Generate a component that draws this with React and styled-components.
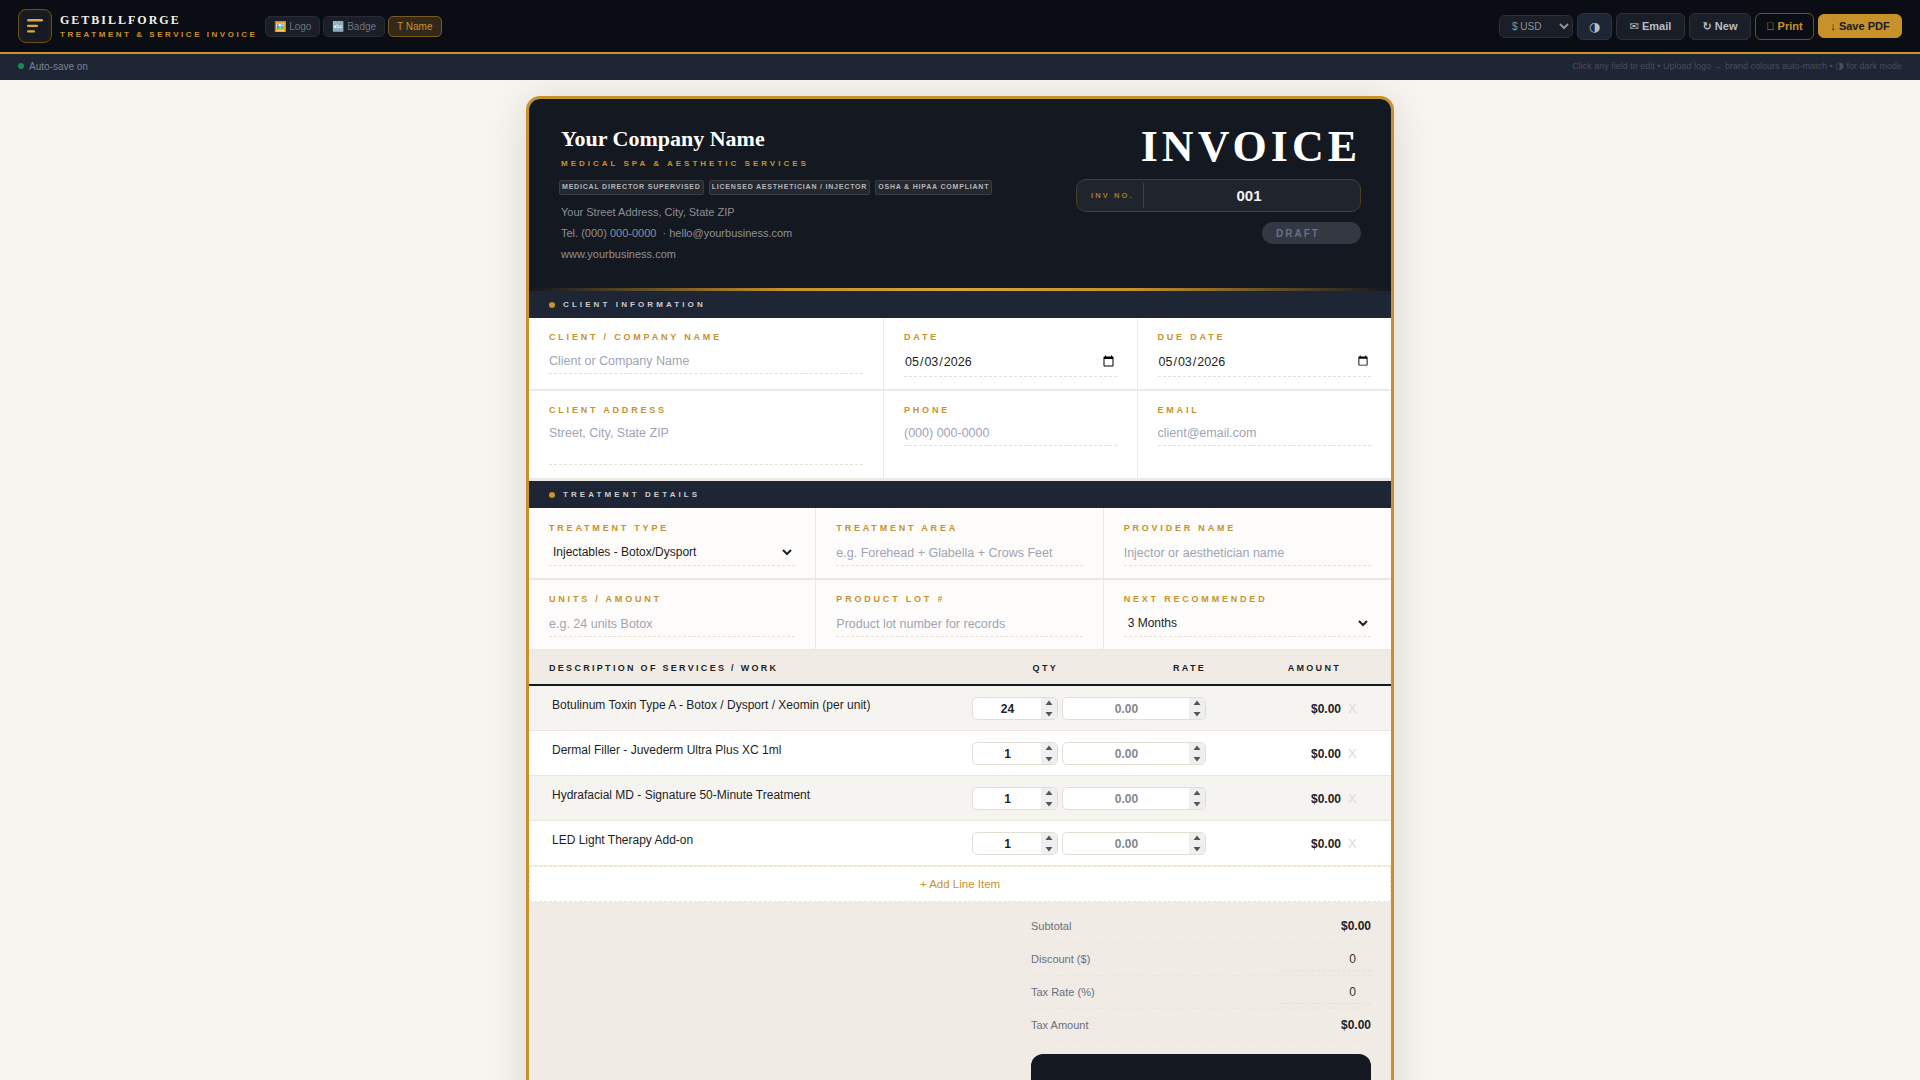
import React from 'react';
import styled, { createGlobalStyle } from 'styled-components';

const Global = createGlobalStyle`
  * { box-sizing: border-box; }
  html, body { margin: 0; padding: 0; background: #f8f5f0; }
  body { font-family: "Liberation Sans", "DejaVu Sans", Arial, sans-serif; }
  ::-webkit-scrollbar { width: 0; height: 0; }
`;

const gold = '#c8922a';
const sans = '"Liberation Sans", "DejaVu Sans", sans-serif';
const spinIcon = `url("data:image/svg+xml,%3Csvg xmlns='http://www.w3.org/2000/svg' width='16' height='22'%3E%3Crect width='16' height='22' fill='%23efefef'/%3E%3Cpath d='M4.5 7.5 8 3l3.5 4.5zM4.5 14.5h7L8 19z' fill='%23555'/%3E%3C/svg%3E")`;

const Page = styled.div`
  min-height: 100vh;
  background: #f8f5f0;
`;
const TopBar = styled.header`
  height: 54px;
  padding: 0 18px;
  display: flex;
  align-items: center;
  justify-content: space-between;
  background: #0a0d14;
  border-bottom: 2px solid ${gold};
`;
const Group = styled.div`
  display: flex;
  align-items: center;
  gap: ${p => p.$gap || 4}px;
`;
const LogoMark = styled.div`
  width: 34px;
  height: 34px;
  border-radius: 8px;
  border: 1px solid #6b5020;
  background: #1f1c18;
  display: flex;
  align-items: center;
  justify-content: center;
`;
const Brand = styled.div`
  margin-left: 5px;
  margin-right: 5px;
  display: flex;
  flex-direction: column;
  gap: 3px;
`;
const BrandName = styled.div`
  font-family: "Liberation Serif", serif;
  font-weight: 700;
  font-size: 12px;
  line-height: 14px;
  letter-spacing: 2px;
  color: #f4f1ea;
`;
const BrandSub = styled.div`
  font-size: 8px;
  font-weight: 700;
  line-height: 10px;
  letter-spacing: 2.53px;
  color: ${gold};
`;
const Tab = styled.button`
  height: 21px;
  padding: 0 8px;
  display: flex;
  align-items: center;
  gap: 3px;
  font-family: ${sans};
  font-size: 10px;
  border-radius: 5px;
  color: ${p => (p.$active ? gold : '#6e7480')};
  background: ${p => (p.$active ? '#33291a' : '#1a1e27')};
  border: 1px solid ${p => (p.$active ? '#7a5a20' : '#262b35')};
`;
const Currency = styled.select`
  width: 74px;
  height: 23px;
  padding: 0 8px;
  font-family: ${sans};
  font-size: 10px;
  color: #8d929c;
  background: #1a1e27;
  border: 1px solid #2c313b;
  border-radius: 6px;
  outline: none;
  option { color: #111; background: #fff; }
`;
const ActionBtn = styled.button`
  width: ${p => p.$w}px;
  height: ${p => (p.$solid ? 24 : 27)}px;
  padding: 0;
  display: flex;
  align-items: center;
  justify-content: center;
  gap: 4px;
  font-family: ${sans};
  font-size: 11px;
  font-weight: 700;
  border-radius: 6px;
  white-space: nowrap;
  color: ${p => (p.$solid ? '#17191f' : p.$gold ? gold : '#b8bcc4')};
  background: ${p => (p.$solid ? gold : p.$gold ? 'transparent' : p.$theme ? '#1e2535' : '#1a1e27')};
  border: 1px solid ${p => (p.$solid ? gold : p.$gold ? '#6b5020' : p.$theme ? '#2c3444' : '#2c313b')};
`;
const HalfMoon = styled.span`
  font-family: "DejaVu Sans", sans-serif;
  font-weight: 400;
  font-size: ${p => p.$size}px;
  line-height: 1;
`;
const StatusBar = styled.div`
  height: 26px;
  padding: 0 18px 2px;
  display: flex;
  align-items: center;
  justify-content: space-between;
  background: #1e2535;
`;
const Saved = styled.div`
  display: flex;
  align-items: center;
  gap: 5px;
  font-size: 10px;
  color: #7d828e;
`;
const Dot = styled.span`
  width: ${p => p.$size || 6}px;
  height: ${p => p.$size || 6}px;
  border-radius: 50%;
  flex: none;
  background: ${p => p.$color};
`;
const Hint = styled.div`
  font-size: 9px;
  color: #474d5b;
`;
const Main = styled.main`
  padding: 16px 0 40px;
  display: flex;
  justify-content: center;
`;
const Card = styled.div`
  width: 868px;
  border: 3px solid ${gold};
  border-radius: 14px;
  overflow: hidden;
  background: #fff;
  box-shadow: 0 4px 40px rgba(0, 0, 0, 0.13);
`;
const Header = styled.div`
  position: relative;
  height: 192px;
  padding: 27px 30px 0 32px;
  display: flex;
  justify-content: space-between;
  background: #141820;
  &::after {
    content: "";
    position: absolute;
    left: 0;
    right: 0;
    bottom: 0;
    height: 3px;
    background: linear-gradient(90deg, transparent 0%, ${gold} 30%, #d9a53a 50%, ${gold} 70%, transparent 100%);
  }
`;
const HeaderLeft = styled.div`
  display: flex;
  flex-direction: column;
`;
const Company = styled.div`
  font-family: "Liberation Serif", serif;
  font-weight: 700;
  font-size: 22px;
  line-height: 26px;
  color: #fff;
`;
const Tagline = styled.div`
  margin-top: 6.5px;
  font-size: 8px;
  line-height: 10px;
  font-weight: 700;
  letter-spacing: 3px;
  color: ${gold};
`;
const Badges = styled.div`
  margin: 11px 0 0 -2px;
  display: flex;
  gap: 5px;
`;
const Badge = styled.span`
  height: 15px;
  padding: 0 2px;
  font-size: 7px;
  font-weight: 700;
  line-height: 12px;
  letter-spacing: 0.8px;
  color: #b4b7bc;
  background: #25282e;
  border: 1px solid #3a3c3e;
  border-radius: 2px;
  white-space: nowrap;
`;
const Contact = styled.div`
  margin-top: 7.5px;
  font-size: 11px;
  line-height: 21px;
  color: #8c9098;
`;
const HeaderRight = styled.div`
  display: flex;
  flex-direction: column;
  align-items: flex-end;
  margin-top: -2px;
`;
const Title = styled.div`
  font-family: "Liberation Serif", serif;
  font-weight: 700;
  font-size: 44px;
  line-height: 46px;
  letter-spacing: 4px;
  color: #fff;
`;
const InvBox = styled.div`
  margin-top: 9px;
  width: 285px;
  height: 33px;
  display: flex;
  align-items: center;
  background: #20242c;
  border: 1px solid #4c3f26;
  border-radius: 10px;
`;
const InvLabel = styled.div`
  width: 67px;
  height: 25px;
  padding-left: 14px;
  display: flex;
  align-items: center;
  border-right: 1px solid #4c3f26;
  font-size: 7.5px;
  font-weight: 700;
  letter-spacing: 2.1px;
  white-space: nowrap;
  color: #a67a26;
`;
const InvValue = styled.input`
  flex: 1;
  min-width: 0;
  padding: 0 6px 0 0;
  border: 0;
  outline: none;
  background: transparent;
  text-align: center;
  font-family: ${sans};
  font-size: 15px;
  font-weight: 700;
  color: #f2f2f2;
`;
const Draft = styled.div`
  margin-top: 10px;
  width: 99px;
  height: 22px;
  padding-left: 14px;
  display: flex;
  align-items: center;
  border-radius: 11px;
  background: #333843;
  font-size: 10px;
  font-weight: 700;
  letter-spacing: 2px;
  color: #687186;
`;
const SectionBar = styled.div`
  height: 27px;
  padding-left: 20px;
  display: flex;
  align-items: center;
  gap: 8px;
  background: #1e2535;
`;
const SectionTitle = styled.div`
  font-size: 8px;
  font-weight: 700;
  letter-spacing: 3.1px;
  color: #c9ccd2;
`;
const Row = styled.div`
  display: grid;
  grid-template-columns: ${p => p.$cols};
  background: ${p => p.$bg || '#fff'};
  border-bottom: ${p => p.$line || 2}px solid #ece8e2;
`;
const Cell = styled.div`
  padding: ${p => p.$top ?? 14}px 20px 12px;
  min-height: ${p => p.$h}px;
  display: flex;
  flex-direction: column;
  border-right: 1px solid #ece8e2;
  &:last-child { border-right: 0; }
`;
const Label = styled.label`
  font-size: 9px;
  font-weight: 700;
  line-height: 11px;
  letter-spacing: 2.8px;
  white-space: nowrap;
  color: ${gold};
  margin-bottom: ${p => p.$gap ?? 5}px;
`;
const fieldCss = `
  width: 100%;
  border: 0;
  border-bottom: 1px dashed #e4e0d6;
  outline: none;
  background: transparent;
  font-family: "Liberation Sans", sans-serif;
  font-size: 12.5px;
  color: #1c1f26;
  &::placeholder { color: #a0a4b4; opacity: 1; }
`;
const TextField = styled.input`
  ${fieldCss}
  height: 27px;
  padding: 2px 0 0;
`;
const AreaField = styled.textarea`
  ${fieldCss}
  display: block;
  height: 46px;
  padding: 7px 0 0;
  line-height: 15px;
  resize: none;
`;
const DateField = styled.input`
  ${fieldCss}
  height: 30px;
  padding: 0;
`;
const SelectField = styled.select`
  ${fieldCss}
  height: 27px;
  padding: 0;
  font-size: 12px;
`;
const TableHead = styled.div`
  height: 34px;
  padding: 0 20px;
  display: grid;
  grid-template-columns: 1fr 86px 144px 134px 23px;
  column-gap: 4px;
  align-items: center;
  background: #f0ebe4;
  border-bottom: 2px solid #141820;
`;
const HeadCell = styled.div`
  font-size: 9px;
  font-weight: 700;
  letter-spacing: 2.3px;
  white-space: nowrap;
  color: #1c1f26;
  text-align: ${p => (p.$right ? 'right' : 'left')};
  padding-right: ${p => p.$pr || 0}px;
`;
const ItemRow = styled.div`
  height: 45px;
  padding: 0 20px;
  display: grid;
  grid-template-columns: 1fr 86px 144px 134px 23px;
  column-gap: 4px;
  align-items: center;
  background: ${p => (p.$odd ? '#f6f4f0' : '#fff')};
  border-bottom: 1px solid #ece7df;
`;
const ItemDesc = styled.textarea`
  display: block;
  width: 100%;
  height: 27px;
  padding: 3px 3px 0;
  border: 0;
  outline: none;
  resize: none;
  overflow: hidden;
  background: transparent;
  font-family: "Liberation Sans", sans-serif;
  font-size: 12px;
  line-height: 15px;
  color: #1c1f26;
`;
const NumInput = styled.input`
  display: block;
  width: 100%;
  height: 23px;
  margin-top: 1px;
  padding: 0 0 0 1px;
  border: 1px solid #e3ded4;
  border-radius: 5px;
  outline: none;
  background: #fff;
  text-align: center;
  font-family: "Liberation Sans", sans-serif;
  font-size: 12px;
  font-weight: 700;
  color: ${p => (p.$muted ? '#85878c' : '#1c1f26')};
  &::-webkit-inner-spin-button {
    -webkit-appearance: none;
    appearance: none;
    opacity: 1;
    width: 16px;
    height: 21px;
    margin: 0;
    background: ${spinIcon} no-repeat center;
  }
`;
const Amount = styled.div`
  padding: 1px 3px 0 0;
  text-align: right;
  font-size: 12px;
  font-weight: 700;
  color: #1c1f26;
`;
const Remove = styled.button`
  padding: 0;
  border: 0;
  background: transparent;
  text-align: left;
  font-family: "Liberation Sans", sans-serif;
  font-size: 13px;
  color: #d8dae0;
`;
const AddLine = styled.button`
  display: block;
  width: 100%;
  height: 36px;
  background: #fff;
  border: 1px dashed #f0e3c6;
  font-family: "Liberation Sans", sans-serif;
  font-size: 11.5px;
  color: ${gold};
`;
const Totals = styled.div`
  padding: 8px 20px 24px;
  display: flex;
  justify-content: flex-end;
  background: #f0ebe4;
`;
const TotalsBox = styled.div`
  width: 340px;
`;
const TotalRow = styled.div`
  height: 33px;
  display: flex;
  align-items: center;
  justify-content: space-between;
  border-bottom: 1px dashed #ebe6dc;
`;
const TotalLabel = styled.span`
  font-size: 11px;
  color: #6b6f7c;
`;
const TotalValue = styled.span`
  font-size: 12px;
  font-weight: 700;
  color: #1c1f26;
`;
const TotalInput = styled.input`
  ${fieldCss}
  width: 90px;
  height: 22px;
  padding: 0;
  margin-top: 1px;
  text-align: right;
  font-size: 12px;
  color: #333;
  &::-webkit-inner-spin-button { opacity: 0; }
`;
const GrandTotal = styled.div`
  margin-top: 12px;
  height: 96px;
  border-radius: 12px;
  background: #141820;
`;

const items = [
  ['Botulinum Toxin Type A - Botox / Dysport / Xeomin (per unit)', 24],
  ['Dermal Filler - Juvederm Ultra Plus XC 1ml', 1],
  ['Hydrafacial MD - Signature 50-Minute Treatment', 1],
  ['LED Light Therapy Add-on', 1],
];

const Noop = () => {};
const clientCols = '355px 253.5px 253.5px';

export default function App() {
  return (
    <Page>
      <Global />
      <TopBar>
        <Group $gap={3}>
          <LogoMark>
            <svg width="26" height="26" viewBox="0 0 26 26">
              <rect width="26" height="26" rx="5" fill="#141a26" />
              <rect x="5" y="6" width="16" height="2.4" rx="1.2" fill="#e0a93a" />
              <rect x="5" y="11.7" width="11" height="2.4" rx="1.2" fill="#e0a93a" />
              <rect x="5" y="17.2" width="8" height="2.4" rx="1.2" fill="#e0a93a" />
            </svg>
          </LogoMark>
          <Brand>
            <BrandName>GETBILLFORGE</BrandName>
            <BrandSub>TREATMENT &amp; SERVICE INVOICE</BrandSub>
          </Brand>
          <Tab>🖼️ Logo</Tab>
          <Tab>🔤 Badge</Tab>
          <Tab $active>T Name</Tab>
        </Group>
        <Group>
          <Currency defaultValue="USD">
            <option value="USD">$ USD</option>
            <option value="EUR">€ EUR</option>
          </Currency>
          <ActionBtn $theme $w={35}><HalfMoon $size={13}>◑</HalfMoon></ActionBtn>
          <ActionBtn $w={69}>✉ Email</ActionBtn>
          <ActionBtn $w={62}>↻ New</ActionBtn>
          <ActionBtn $gold $w={59}>{'\uE000'} Print</ActionBtn>
          <ActionBtn $solid $w={84}>↓ Save PDF</ActionBtn>
        </Group>
      </TopBar>
      <StatusBar>
        <Saved><Dot $color="#1a8a5a" />Auto-save on</Saved>
        <Hint>Click any field to edit • Upload logo → brand colours auto-match • <HalfMoon $size={10}>◑</HalfMoon> for dark mode</Hint>
      </StatusBar>
      <Main>
        <Card>
          <Header>
            <HeaderLeft>
              <Company>Your Company Name</Company>
              <Tagline>MEDICAL SPA &amp; AESTHETIC SERVICES</Tagline>
              <Badges>
                <Badge>MEDICAL DIRECTOR SUPERVISED</Badge>
                <Badge>LICENSED AESTHETICIAN / INJECTOR</Badge>
                <Badge>OSHA &amp; HIPAA COMPLIANT</Badge>
              </Badges>
              <Contact>
                <div>Your Street Address, City, State ZIP</div>
                <div>Tel. (000) 000-0000 &nbsp;·&nbsp;hello@yourbusiness.com</div>
                <div>www.yourbusiness.com</div>
              </Contact>
            </HeaderLeft>
            <HeaderRight>
              <Title>INVOICE</Title>
              <InvBox>
                <InvLabel>INV NO.</InvLabel>
                <InvValue defaultValue="001" />
              </InvBox>
              <Draft>DRAFT</Draft>
            </HeaderRight>
          </Header>

          <SectionBar><Dot $color={gold} /><SectionTitle>CLIENT INFORMATION</SectionTitle></SectionBar>
          <Row $cols={clientCols}>
            <Cell><Label $gap={4}>CLIENT / COMPANY NAME</Label><TextField placeholder="Client or Company Name" /></Cell>
            <Cell><Label $gap={4}>DATE</Label><DateField type="date" defaultValue="2026-05-03" /></Cell>
            <Cell><Label $gap={4}>DUE DATE</Label><DateField type="date" defaultValue="2026-05-03" /></Cell>
          </Row>
          <Row $cols={clientCols} $line={3}>
            <Cell $h={87}><Label $gap={3}>CLIENT ADDRESS</Label><AreaField placeholder="Street, City, State ZIP" /></Cell>
            <Cell $h={87}><Label $gap={3}>PHONE</Label><TextField placeholder="(000) 000-0000" /></Cell>
            <Cell $h={87}><Label $gap={3}>EMAIL</Label><TextField placeholder="client@email.com" /></Cell>
          </Row>

          <SectionBar><Dot $color={gold} /><SectionTitle>TREATMENT DETAILS</SectionTitle></SectionBar>
          <Row $cols="repeat(3, 1fr)" $bg="#fdfcfa">
            <Cell $top={15}><Label>TREATMENT TYPE</Label>
              <SelectField defaultValue="a"><option value="a">Injectables - Botox/Dysport</option></SelectField>
            </Cell>
            <Cell $top={15}><Label>TREATMENT AREA</Label><TextField placeholder="e.g. Forehead + Glabella + Crows Feet" /></Cell>
            <Cell $top={15}><Label>PROVIDER NAME</Label><TextField placeholder="Injector or aesthetician name" /></Cell>
          </Row>
          <Row $cols="repeat(3, 1fr)" $bg="#fdfcfa" $line={3}>
            <Cell><Label>UNITS / AMOUNT</Label><TextField placeholder="e.g. 24 units Botox" /></Cell>
            <Cell><Label>PRODUCT LOT #</Label><TextField placeholder="Product lot number for records" /></Cell>
            <Cell><Label>NEXT RECOMMENDED</Label>
              <SelectField defaultValue="3"><option value="3">3 Months</option></SelectField>
            </Cell>
          </Row>

          <TableHead>
            <HeadCell>DESCRIPTION OF SERVICES / WORK</HeadCell>
            <HeadCell $right>QTY</HeadCell>
            <HeadCell $right>RATE</HeadCell>
            <HeadCell $right $pr={3}>AMOUNT</HeadCell>
            <span />
          </TableHead>
          {items.map(([name, qty], i) => (
            <ItemRow key={name} $odd={i % 2 === 0}>
              <ItemDesc rows={1} defaultValue={name} />
              <NumInput type="number" defaultValue={qty} />
              <NumInput type="number" $muted placeholder="0.00" value="0.00" onChange={Noop} />
              <Amount>$0.00</Amount>
              <Remove>X</Remove>
            </ItemRow>
          ))}
          <AddLine>+ Add Line Item</AddLine>

          <Totals>
            <TotalsBox>
              <TotalRow><TotalLabel>Subtotal</TotalLabel><TotalValue>$0.00</TotalValue></TotalRow>
              <TotalRow><TotalLabel>Discount ($)</TotalLabel><TotalInput type="number" defaultValue="0" /></TotalRow>
              <TotalRow><TotalLabel>Tax Rate (%)</TotalLabel><TotalInput type="number" defaultValue="0" /></TotalRow>
              <TotalRow><TotalLabel>Tax Amount</TotalLabel><TotalValue>$0.00</TotalValue></TotalRow>
              <GrandTotal />
            </TotalsBox>
          </Totals>
        </Card>
      </Main>
    </Page>
  );
}
